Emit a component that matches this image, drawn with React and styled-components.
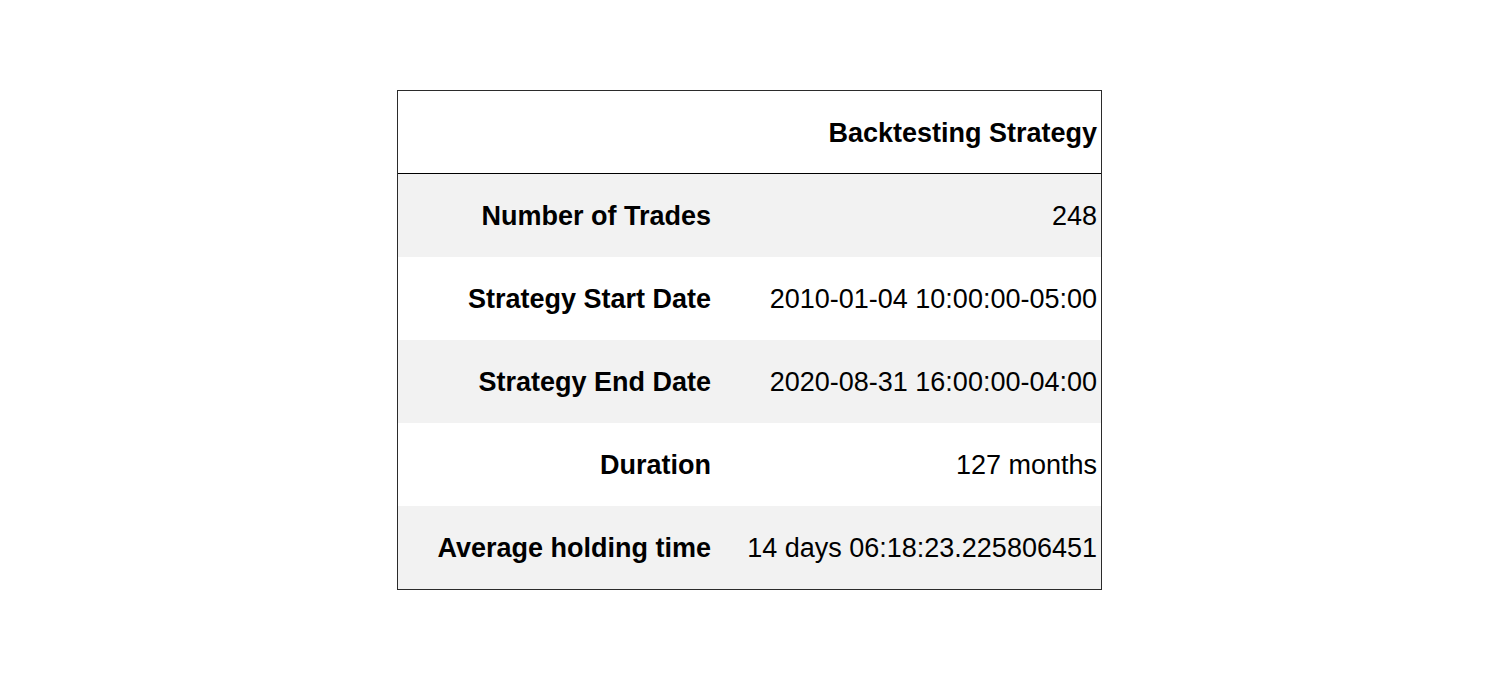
import React from 'react'
import styled, { createGlobalStyle } from 'styled-components'

const rows = [
  ['Number of Trades', '248'],
  ['Strategy Start Date', '2010-01-04 10:00:00-05:00'],
  ['Strategy End Date', '2020-08-31 16:00:00-04:00'],
  ['Duration', '127 months'],
  ['Average holding time', '14 days 06:18:23.225806451'],
]

export default function App() {
  return (
    <>
      <GlobalStyle />
      <Page>
        <Table>
          <colgroup>
            <col style={{ width: 318 }} />
            <col />
          </colgroup>
          <thead>
            <tr>
              <HeadCell />
              <HeadCell>Backtesting Strategy</HeadCell>
            </tr>
          </thead>
          <tbody>
            {rows.map(([label, value], i) => (
              <Row key={label} $striped={i % 2 === 0}>
                <Label>{label}</Label>
                <Value>{value}</Value>
              </Row>
            ))}
          </tbody>
        </Table>
      </Page>
    </>
  )
}

const GlobalStyle = createGlobalStyle`
  body {
    margin: 0;
    background: #fff;
    font-family: "Liberation Sans", Arial, Helvetica, sans-serif;
    color: #000;
  }
`

const Page = styled.div`
  display: flex;
  justify-content: center;
  padding: 90px 1px 0 0;
`

const Table = styled.table`
  width: 705px;
  table-layout: fixed;
  border: 1px solid #2b2b2b;
  border-collapse: separate;
  border-spacing: 0;
  font-size: 27px;
`

const HeadCell = styled.th`
  height: 80px;
  padding: 2px 4px 0 0;
  text-align: right;
  font-weight: bold;
  border-bottom: 1px solid #000;
  vertical-align: middle;
`

const Row = styled.tr`
  background: ${p => (p.$striped ? '#f2f2f2' : '#fff')};
`

const Label = styled.th`
  height: 81px;
  padding: 2px 5px 0 0;
  text-align: right;
  font-weight: bold;
  white-space: nowrap;
  vertical-align: middle;
`

const Value = styled.td`
  height: 81px;
  padding: 2px 4px 0 0;
  text-align: right;
  white-space: nowrap;
  vertical-align: middle;
`
